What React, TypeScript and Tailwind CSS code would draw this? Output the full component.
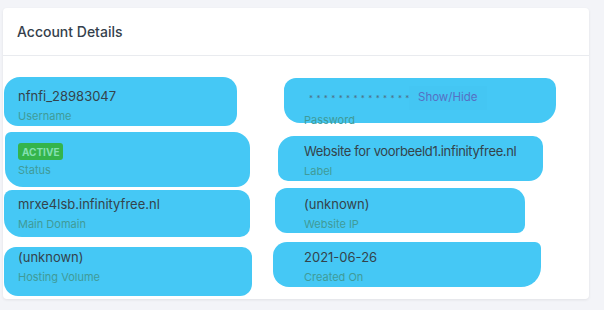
import type { ReactNode } from 'react';

type Blob = { cls: string };

function Field({
  value,
  label,
  blob,
  valueCls = '',
}: {
  value: ReactNode;
  label: string;
  blob: Blob;
  valueCls?: string;
}) {
  return (
    <div className="relative">
      {/* marker scribble over the field */}
      <div className={`absolute bg-[#45c8f5] ${blob.cls}`} />
      <div className="relative flex flex-col">
        <div className={`flex items-center text-[13px] leading-[20px] text-[#34434b] ${valueCls}`}>{value}</div>
        <div className="mt-[2px] text-[11px] leading-[16px] text-[#409b98]">{label}</div>
      </div>
    </div>
  );
}

export default function App() {
  return (
    <div className="w-[604px] h-[310px] bg-[#f3f4f8] pt-[8px] pl-[3px] overflow-hidden font-['Inter',sans-serif]">
      <div className="w-[586px] h-[291px] bg-white rounded-[4px] shadow-[0_1px_3px_rgba(0,0,0,0.08)] flex flex-col">
        {/* Header */}
        <div className="h-[48px] flex items-center pl-[14px] border-b border-[#e9ebef]">
          <h2 className="text-[14px] font-medium text-[#353f4c]">Account Details</h2>
        </div>

        {/* Body */}
        <div className="grid grid-cols-[286px_1fr] grid-rows-[55px_53px_53px_52px] pl-[15px] pt-[30px]">
          <Field
            value="nfnfi_28983047"
            label="Username"
            blob={{ cls: '-left-[14px] -top-[9px] w-[233px] h-[49px] rounded-[16px_14px_12px_14px]' }}
          />
          <div className="relative">
            <div className="absolute bg-[#45c8f5] -left-[20px] -top-[8px] w-[272px] h-[45px] rounded-[12px_10px_18px_16px]" />
            <div className="relative flex flex-col">
              <div className="flex items-center h-[24px] pl-[5px]">
                <span className="text-[8px] tracking-[3.4px] text-[#4f6f86] w-[100px]">**************</span>
                <span className="text-[11.5px] text-[#5670c4] px-[9px] py-[3px] bg-[#44c6f3]">Show/Hide</span>
              </div>
              <div className="mt-[2px] text-[11px] leading-[16px] text-[#409b98]">Password</div>
            </div>
          </div>

          <Field
            value={
              <span className="inline-flex items-center h-[17px] px-[4px] rounded-[3px] bg-[#34b44b] text-[10px] font-bold text-[#82e0b0] leading-none mt-[2px]">
                ACTIVE
              </span>
            }
            label="Status"
            blob={{ cls: '-left-[13px] -top-[9px] w-[245px] h-[55px] rounded-[6px_16px_14px_18px]' }}
          />
          <Field
            value="Website for voorbeeld1.infinityfree.nl"
            valueCls="tracking-[-0.35px]"
            label="Label"
            blob={{ cls: '-left-[26px] -top-[5px] w-[265px] h-[45px] rounded-[16px_10px_14px_10px]' }}
          />

          <Field
            value="mrxe4lsb.infinityfree.nl"
            label="Main Domain"
            blob={{ cls: '-left-[14px] -top-[4px] w-[246px] h-[47px] rounded-[8px_12px_10px_18px]' }}
          />
          <Field
            value="(unknown)"
            label="Website IP"
            blob={{ cls: '-left-[29px] -top-[6px] w-[250px] h-[45px] rounded-[12px_14px_8px_12px]' }}
          />

          <Field
            value="(unknown)"
            label="Hosting Volume"
            blob={{ cls: '-left-[14px] top-[0px] w-[248px] h-[49px] rounded-[12px_10px_12px_14px]' }}
          />
          <Field
            value="2021-06-26"
            label="Created On"
            blob={{ cls: '-left-[31px] -top-[5px] w-[268px] h-[45px] rounded-[14px_6px_20px_16px]' }}
          />
        </div>
      </div>
    </div>
  );
}
